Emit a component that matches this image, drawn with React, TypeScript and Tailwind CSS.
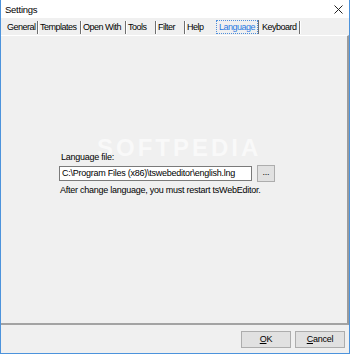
import React from 'react';

const tabs = [
  { label: 'General', w: 'w-[33px]' },
  { label: 'Templates', w: 'w-[43px]' },
  { label: 'Open With', w: 'w-[45px]' },
  { label: 'Tools', w: 'w-[30px]' },
  { label: 'Filter', w: 'w-[29px]' },
  { label: 'Help', w: 'w-[30px]' },
];

export default function App() {
  return (
    <div className="w-[350px] h-[354px] flex flex-col bg-[#f0f0f0] border-x border-b border-[#4c93dc] font-['Liberation_Sans',sans-serif] text-[9px] tracking-[-0.25px] text-black leading-none">
      <div className="h-[18px] bg-white flex items-center justify-between pl-[4px] pr-[6px] shrink-0">
        <span className="text-[9.5px] mt-[1px]">Settings</span>
        <svg width="9" height="9" viewBox="0 0 9 9" className="mt-[1px]">
          <path d="M0.5 0.5 L8.5 8.5 M8.5 0.5 L0.5 8.5" stroke="#222" strokeWidth="1" />
        </svg>
      </div>
      <div className="flex items-center h-[17px] pl-[4px] pt-[1px] shrink-0 tracking-[-0.5px]">
        {tabs.map(t => (
          <div
            key={t.label}
            className={`${t.w} h-[13px] flex items-center pl-[2px] ${t.label === 'Help' ? '' : 'border-r border-[#6f6f6f] shadow-[1px_0_0_#ffffff]'}`}
          >
            {t.label}
          </div>
        ))}
        <div className="w-[42px] h-[14px] ml-[1px] flex items-center pl-[2px] border border-dotted border-[#4f8fdc] text-[#2a7ae2] shadow-[1px_0_0_#6f6f6f]">
          Language
        </div>
        <div className="w-[41px] h-[13px] ml-[1px] flex items-center pl-[3px] border-r border-[#6f6f6f] shadow-[1px_0_0_#ffffff]">Keyboard</div>
      </div>
      <div className="flex-1 border-t border-white border-r-2 border-r-[#9c9c9c] border-b-2 border-b-[#a3a3a3] flex flex-col pl-[58px] pt-[117px] relative">
        <div className="absolute left-[96px] top-[100px] text-[24px] font-bold tracking-[3px] text-white opacity-60 pointer-events-none">SOFTPEDIA</div>
        <div className="relative">
          <div className="ml-[2px] h-[11px]">Language file:</div>
          <div className="flex items-center mt-[1px]">
            <div className="w-[193px] h-[15px] bg-white border border-[#7a7a7a] flex items-center pl-[2px]">C:\Program Files (x86)\tswebeditor\english.lng</div>
            <div className="ml-[5px] w-[18px] h-[17px] border border-[#adadad] bg-[#e1e1e1] flex items-center justify-center pb-[3px]">...</div>
          </div>
          <div className="ml-[1px] mt-[4px]">After change language, you must restart tsWebEditor.</div>
        </div>
      </div>
      <div className="flex-1 max-h-[28px] flex items-start justify-end gap-[4px] pr-[4px] pt-[6px] shrink-0">
        <button className="w-[50px] h-[17px] border border-[#adadad] bg-[#e1e1e1] flex items-center justify-center"><span className="underline">O</span>K</button>
        <button className="w-[50px] h-[17px] border border-[#adadad] bg-[#e1e1e1] flex items-center justify-center"><span className="underline">C</span>ancel</button>
      </div>
    </div>
  );
}
